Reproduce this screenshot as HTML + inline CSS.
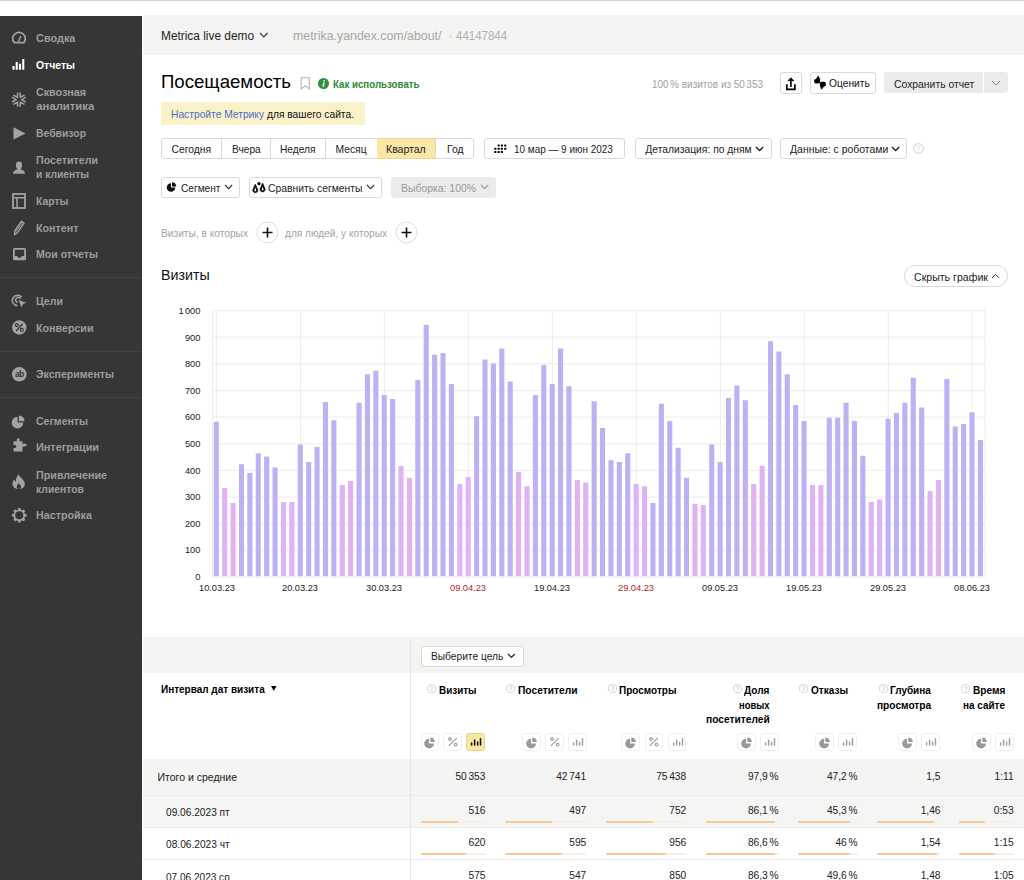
<!DOCTYPE html><html><head><meta charset="utf-8"><title>Metrica</title><style>
html,body{margin:0;padding:0;width:1024px;height:880px;overflow:hidden;background:#fff;font-family:"Liberation Sans", sans-serif;}
.t{position:absolute;white-space:nowrap;line-height:1;}
.b{position:absolute;box-sizing:border-box;border:1px solid #d9d9d9;border-radius:3px;background:#fff;}
svg{overflow:visible;position:absolute}
</style></head><body>
<div style="position:absolute;left:0px;top:0px;width:1024.00px;height:1.00px;background:#d4d4d4"></div>
<div style="position:absolute;left:0px;top:16px;width:142.00px;height:864.00px;background:#363636"></div>
<div class="t" style="left:36.30px;top:33.23px;font-size:11.3px;color:#9d9d9d;font-weight:700;transform:scaleX(0.9656);transform-origin:0 0;">Сводка</div>
<div class="t" style="left:36.30px;top:60.23px;font-size:11.3px;color:#fff;font-weight:700;transform:scaleX(0.9241);transform-origin:0 0;">Отчеты</div>
<div class="t" style="left:36.30px;top:87.23px;font-size:11.3px;color:#9d9d9d;font-weight:700;transform:scaleX(0.9489);transform-origin:0 0;">Сквозная</div>
<div class="t" style="left:36.30px;top:101.23px;font-size:11.3px;color:#9d9d9d;font-weight:700;">аналитика</div>
<div class="t" style="left:36.30px;top:127.73px;font-size:11.3px;color:#9d9d9d;font-weight:700;transform:scaleX(0.9207);transform-origin:0 0;">Вебвизор</div>
<div class="t" style="left:36.30px;top:155.23px;font-size:11.3px;color:#9d9d9d;font-weight:700;transform:scaleX(0.9434);transform-origin:0 0;">Посетители</div>
<div class="t" style="left:36.30px;top:169.23px;font-size:11.3px;color:#9d9d9d;font-weight:700;transform:scaleX(0.9091);transform-origin:0 0;">и клиенты</div>
<div class="t" style="left:36.30px;top:196.23px;font-size:11.3px;color:#9d9d9d;font-weight:700;transform:scaleX(0.9218);transform-origin:0 0;">Карты</div>
<div class="t" style="left:36.30px;top:222.73px;font-size:11.3px;color:#9d9d9d;font-weight:700;transform:scaleX(0.9486);transform-origin:0 0;">Контент</div>
<div class="t" style="left:36.30px;top:249.23px;font-size:11.3px;color:#9d9d9d;font-weight:700;transform:scaleX(0.9333);transform-origin:0 0;">Мои отчеты</div>
<div class="t" style="left:36.30px;top:295.93px;font-size:11.3px;color:#9d9d9d;font-weight:700;transform:scaleX(0.9374);transform-origin:0 0;">Цели</div>
<div class="t" style="left:36.30px;top:322.93px;font-size:11.3px;color:#9d9d9d;font-weight:700;transform:scaleX(0.9460);transform-origin:0 0;">Конверсии</div>
<div class="t" style="left:36.30px;top:369.03px;font-size:11.3px;color:#9d9d9d;font-weight:700;transform:scaleX(0.9348);transform-origin:0 0;">Эксперименты</div>
<div class="t" style="left:36.30px;top:415.93px;font-size:11.3px;color:#9d9d9d;font-weight:700;transform:scaleX(0.9319);transform-origin:0 0;">Сегменты</div>
<div class="t" style="left:36.30px;top:442.43px;font-size:11.3px;color:#9d9d9d;font-weight:700;transform:scaleX(0.9619);transform-origin:0 0;">Интеграции</div>
<div class="t" style="left:36.30px;top:469.53px;font-size:11.3px;color:#9d9d9d;font-weight:700;transform:scaleX(0.9504);transform-origin:0 0;">Привлечение</div>
<div class="t" style="left:36.30px;top:483.53px;font-size:11.3px;color:#9d9d9d;font-weight:700;transform:scaleX(0.9184);transform-origin:0 0;">клиентов</div>
<div class="t" style="left:36.30px;top:510.23px;font-size:11.3px;color:#9d9d9d;font-weight:700;transform:scaleX(0.9487);transform-origin:0 0;">Настройка</div>
<div style="position:absolute;left:0px;top:276.5px;width:142.00px;height:1.00px;background:#434343"></div>
<div style="position:absolute;left:0px;top:351.1px;width:142.00px;height:1.00px;background:#434343"></div>
<div style="position:absolute;left:0px;top:396.9px;width:142.00px;height:1.00px;background:#434343"></div>

<svg style="left:11px;top:31px" width="16" height="13"><path d="M3 11.6 A6.3 6.3 0 1 1 13 11.6 Z" stroke="#a3a3a3" stroke-width="1.7" fill="none" stroke-linejoin="round"/><path d="M7.3 11 L9.8 5" stroke="#a3a3a3" stroke-width="1.4"/></svg>
<svg style="left:12px;top:58px" width="14" height="12"><path d="M1.5 8 V11.75 M4.75 4 V11.75 M8 5.75 V11.75 M11.25 1 V11.75" stroke="#fff" stroke-width="2.1"/></svg>
<svg style="left:11px;top:91.5px" width="16" height="16"><g transform="translate(7.9,7.7)" stroke="#a3a3a3" stroke-width="1.5" fill="none"><path d="M6.8 -2.5 L2.9 0 L6.8 2.5" transform="rotate(0)"/><path d="M6.8 -2.5 L2.9 0 L6.8 2.5" transform="rotate(60)"/><path d="M6.8 -2.5 L2.9 0 L6.8 2.5" transform="rotate(120)"/><path d="M6.8 -2.5 L2.9 0 L6.8 2.5" transform="rotate(180)"/><path d="M6.8 -2.5 L2.9 0 L6.8 2.5" transform="rotate(240)"/><path d="M6.8 -2.5 L2.9 0 L6.8 2.5" transform="rotate(300)"/></g></svg>
<svg style="left:12.5px;top:126.5px" width="13" height="13"><path d="M0.5 0.3 L12.5 6.4 L0.5 12.6 Z" fill="#a3a3a3"/></svg>
<svg style="left:12px;top:160.5px" width="14" height="13"><path d="M7 0.5 C9.5 0.5 10.3 2.5 10 5 C9.8 6.8 9 8 8.5 8.6 C11 9.3 13 10 13 12.8 H1 C1 10 3 9.3 5.5 8.6 C5 8 4.2 6.8 4 5 C3.7 2.5 4.5 0.5 7 0.5Z" fill="#a3a3a3"/></svg>
<svg style="left:12px;top:193px" width="14" height="16"><rect x="1" y="1" width="12" height="14" stroke="#a3a3a3" stroke-width="1.8" fill="none"/><path d="M1 4.7 H13 M5 4.7 V15" stroke="#a3a3a3" stroke-width="1.5"/></svg>
<svg style="left:13px;top:220px" width="12" height="16"><path d="M1.5 14.8 L1.8 11 L8.5 1.2 L11 3 L4.3 12.8 Z" stroke="#a3a3a3" stroke-width="1.4" fill="none" stroke-linejoin="round"/><path d="M3 11.5 L9.6 2" stroke="#a3a3a3" stroke-width="0.9"/></svg>
<svg style="left:12.5px;top:248px" width="13" height="13"><path d="M1.5 0 H11.5 A1.5 1.5 0 0 1 13 1.5 V10.7 A1.5 1.5 0 0 1 11.5 12.2 H1.5 A1.5 1.5 0 0 1 0 10.7 V1.5 A1.5 1.5 0 0 1 1.5 0Z M1.8 1.8 V8 H4 L5.5 9.7 H7.5 L9 8 H11.2 V1.8Z" fill="#a3a3a3" fill-rule="evenodd"/></svg>
<svg style="left:11.5px;top:294px" width="15" height="14"><path d="M9.7 3.3 A5.2 5.2 0 1 0 5.5 11.6" stroke="#a3a3a3" stroke-width="1.6" fill="none"/><path d="M8.5 4.8 A2.6 2.6 0 1 0 5.6 8.5" stroke="#a3a3a3" stroke-width="1.5" fill="none"/><path d="M6.5 6 L14.3 8.8 L11 10 L9.6 13.4 Z" fill="#a3a3a3"/></svg>
<svg style="left:11.5px;top:320px" width="15" height="15"><circle cx="7.3" cy="7.5" r="7.2" fill="#a3a3a3"/><path d="M4.2 11 L10.5 4" stroke="#363636" stroke-width="1.3"/><circle cx="4.9" cy="5.1" r="1.5" stroke="#363636" stroke-width="1.1" fill="none"/><circle cx="9.8" cy="9.9" r="1.5" stroke="#363636" stroke-width="1.1" fill="none"/></svg>
<svg style="left:11.5px;top:367px" width="15" height="15"><circle cx="7.3" cy="7.3" r="7.3" fill="#a3a3a3"/><text x="7.3" y="10.2" font-size="8.5" font-weight="700" text-anchor="middle" fill="#363636" font-family='"Liberation Sans"' letter-spacing="-0.6">ab</text></svg>
<svg style="left:11px;top:414.5px" width="15" height="14"><path d="M6.5 1.8 A5.8 5.8 0 1 0 12.3 7.6 H6.5 Z" fill="#a3a3a3"/><path d="M7.8 0.5 A5.8 5.8 0 0 1 13.6 6.3 H7.8 Z" fill="#a3a3a3"/></svg>
<svg style="left:12.5px;top:438px" width="15" height="14"><path d="M0.5 3.3 H4 C3.5 2.5 3.5 0.3 5.2 0.3 C6.9 0.3 6.9 2.5 6.4 3.3 H9.5 V6 C10.5 5.5 13.8 5.5 13.8 7.1 C13.8 8.7 10.5 8.7 9.5 8.2 V13.5 H0.5 V9.8 C1.5 10.3 3.2 10 3.2 8.5 C3.2 7 1.5 6.8 0.5 7.3 Z" fill="#a3a3a3"/></svg>
<svg style="left:12px;top:474px" width="14" height="16"><path d="M6.5 0.3 C7 3 12.8 5.5 12.8 10 C12.8 13.3 10.3 15 7 15 C3.3 15 0.5 13.2 0.5 9.5 C0.5 7.5 1.8 6 2.5 5.2 C2.7 6.8 3.3 7.6 4 7.8 C3.6 4.8 5.3 2.2 6.5 0.3Z" fill="#a3a3a3"/><path d="M6.8 8.5 C7 10.2 9 11 9 13 C9 14.5 8 15 6.9 15 C5.6 15 4.7 14.3 4.7 13 C4.7 11.2 6.5 10.2 6.8 8.5Z" fill="#363636"/></svg>
<svg style="left:11.5px;top:507.5px" width="15" height="15"><g transform="translate(7.3,7.3)"><circle r="5" stroke="#a3a3a3" stroke-width="1.8" fill="none"/><rect x="-1.3" y="-7.3" width="2.6" height="2.8" fill="#a3a3a3" transform="rotate(0)"/><rect x="-1.3" y="-7.3" width="2.6" height="2.8" fill="#a3a3a3" transform="rotate(45)"/><rect x="-1.3" y="-7.3" width="2.6" height="2.8" fill="#a3a3a3" transform="rotate(90)"/><rect x="-1.3" y="-7.3" width="2.6" height="2.8" fill="#a3a3a3" transform="rotate(135)"/><rect x="-1.3" y="-7.3" width="2.6" height="2.8" fill="#a3a3a3" transform="rotate(180)"/><rect x="-1.3" y="-7.3" width="2.6" height="2.8" fill="#a3a3a3" transform="rotate(225)"/><rect x="-1.3" y="-7.3" width="2.6" height="2.8" fill="#a3a3a3" transform="rotate(270)"/><rect x="-1.3" y="-7.3" width="2.6" height="2.8" fill="#a3a3a3" transform="rotate(315)"/></g></svg>

<div style="position:absolute;left:143px;top:15px;width:881.00px;height:40.00px;background:#f4f4f2"></div>
<div class="t" style="left:161.25px;top:29.84px;font-size:12px;color:#222;font-weight:400;transform:scaleX(0.9890);transform-origin:0 0;">Metrica live demo</div>
<svg style="left:258.6px;top:32.2px" width="10" height="7"><path d="M1 1 L4.8 4.9 L8.6 1" stroke="#333" stroke-width="1.1" fill="none"/></svg>
<div class="t" style="left:293.00px;top:29.84px;font-size:12px;color:#a6a6a6;font-weight:400;transform:scaleX(1.0307);transform-origin:0 0;">metrika.yandex.com/about/</div>
<div class="t" style="left:448.50px;top:29.84px;font-size:12px;color:#bbb;font-weight:400;">·</div>
<div class="t" style="left:455.80px;top:29.84px;font-size:12px;color:#b0b0b0;font-weight:400;transform:scaleX(0.9553);transform-origin:0 0;">44147844</div>
<div class="t" style="left:161.25px;top:73.09px;font-size:18.5px;color:#000;font-weight:400;transform:scaleX(1.0054);transform-origin:0 0;">Посещаемость</div>
<svg style="left:300px;top:77px" width="11" height="14"><path d="M1.2 0.8 H9.3 V12.2 L5.25 8.6 L1.2 12.2 Z" stroke="#b5b5b5" stroke-width="1.1" fill="none" stroke-linejoin="round"/></svg>
<svg style="left:317.9px;top:77.6px" width="11" height="11"><circle cx="5.5" cy="5.5" r="5.5" fill="#2f9040"/><path d="M5.9 4.5 L5.2 8.6" stroke="#fff" stroke-width="1.5"/><circle cx="6.1" cy="2.8" r="0.85" fill="#fff"/></svg>
<div class="t" style="left:332.50px;top:78.61px;font-size:10.5px;color:#2b8a35;font-weight:700;transform:scaleX(0.9243);transform-origin:0 0;">Как использовать</div>
<div style="position:absolute;left:161px;top:102px;width:203.50px;height:23.00px;background:#fbf1c8"></div>
<div class="t" style="left:171.25px;top:108.61px;font-size:10.5px;color:#111;font-weight:400;transform:scaleX(0.9765);transform-origin:0 0;"><span style="color:#4b6cc8">Настройте Метрику</span> для вашего сайта.</div>
<div class="t" style="left:652.00px;top:78.61px;font-size:10.5px;color:#a0a0a0;font-weight:400;transform:scaleX(0.9510);transform-origin:0 0;">100<span style="margin-left:1.5px"></span>% визитов из 50<span style="margin-left:1.5px"></span>353</div>
<div class="b" style="left:779.5px;top:72px;width:22px;height:21.5px"></div>
<svg style="left:784px;top:76px" width="13" height="16"><path d="M6.9 4.5 V11" stroke="#000" stroke-width="1.6"/><path d="M4 4.7 L6.9 1.8 L9.8 4.7 Z" fill="#000" stroke="#000" stroke-width="0.8" stroke-linejoin="round"/><path d="M2.8 8.3 V13.4 H10.9 V8.3" stroke="#000" stroke-width="1.7" fill="none"/></svg>
<div class="b" style="left:809.5px;top:72px;width:66px;height:21.5px"></div>
<svg style="left:813px;top:75px" width="15" height="16"><rect x="1.2" y="3.9" width="5.9" height="4.6" rx="1.7" fill="#000"/><path d="M2.6 4.8 L5.4 1.1 L6.9 4.8 Z" fill="#000" stroke="#000" stroke-width="0.6" stroke-linejoin="round"/><rect x="6.9" y="6.8" width="6" height="4.6" rx="1.7" fill="#000"/><path d="M7.1 10.6 L8.6 14.3 L11.4 10.6 Z" fill="#000" stroke="#000" stroke-width="0.6" stroke-linejoin="round"/></svg>
<div class="t" style="left:828.75px;top:78.41px;font-size:10.5px;color:#111;font-weight:400;transform:scaleX(0.9739);transform-origin:0 0;">Оценить</div>
<div style="position:absolute;left:884px;top:72px;width:99.00px;height:21.20px;background:#ebebeb;border-radius:3px 0 0 3px"></div>
<div style="position:absolute;left:984px;top:72px;width:24.00px;height:21.20px;background:#ebebeb;border-radius:0 3px 3px 0"></div>
<div class="t" style="left:893.60px;top:78.51px;font-size:10.5px;color:#222;font-weight:400;transform:scaleX(0.9879);transform-origin:0 0;">Сохранить отчет</div>
<svg style="left:991px;top:80px" width="10" height="6"><path d="M1 1 L5 5 L9 1" stroke="#888" stroke-width="1" fill="none"/></svg>
<div class="b" style="left:161px;top:138px;width:313px;height:21px"></div>
<div class="t" style="left:171.50px;top:144.88px;font-size:10.3px;color:#222;font-weight:400;">Сегодня</div>
<div style="position:absolute;left:220.75px;top:138px;width:1.00px;height:21.00px;background:#d9d9d9"></div>
<div class="t" style="left:231.50px;top:144.88px;font-size:10.3px;color:#222;font-weight:400;transform:scaleX(0.9884);transform-origin:0 0;">Вчера</div>
<div style="position:absolute;left:270.0px;top:138px;width:1.00px;height:21.00px;background:#d9d9d9"></div>
<div class="t" style="left:280.25px;top:144.88px;font-size:10.3px;color:#222;font-weight:400;transform:scaleX(0.9881);transform-origin:0 0;">Неделя</div>
<div style="position:absolute;left:325.0px;top:138px;width:1.00px;height:21.00px;background:#d9d9d9"></div>
<div class="t" style="left:335.50px;top:144.88px;font-size:10.3px;color:#222;font-weight:400;">Месяц</div>
<div style="position:absolute;left:376.5px;top:138px;width:59.25px;height:21.00px;background:#fae7a5;border-top:1px solid #e8d68f;border-bottom:1px solid #e8d68f;box-sizing:border-box"></div>
<div class="t" style="left:386.25px;top:144.88px;font-size:10.3px;color:#222;font-weight:400;transform:scaleX(1.0212);transform-origin:0 0;">Квартал</div>
<div style="position:absolute;left:435.25px;top:138px;width:1.00px;height:21.00px;background:#d9d9d9"></div>
<div class="t" style="left:446.50px;top:144.88px;font-size:10.3px;color:#222;font-weight:400;transform:scaleX(1.0062);transform-origin:0 0;">Год</div>
<div class="b" style="left:484.25px;top:138px;width:140.5px;height:21px"></div>
<svg style="left:494px;top:143.5px" width="14" height="11"><rect x="3.5999999999999996" y="0.5" width="2.1" height="2.1" rx="0.5" fill="#000"/><rect x="6.8999999999999995" y="0.5" width="2.1" height="2.1" rx="0.5" fill="#000"/><rect x="10.2" y="0.5" width="2.1" height="2.1" rx="0.5" fill="#000"/><rect x="0.3" y="3.7" width="2.1" height="2.1" rx="0.5" fill="#000"/><rect x="3.5999999999999996" y="3.7" width="2.1" height="2.1" rx="0.5" fill="#000"/><rect x="6.8999999999999995" y="3.7" width="2.1" height="2.1" rx="0.5" fill="#000"/><rect x="10.2" y="3.7" width="2.1" height="2.1" rx="0.5" fill="#000"/><rect x="0.3" y="6.9" width="2.1" height="2.1" rx="0.5" fill="#000"/><rect x="3.5999999999999996" y="6.9" width="2.1" height="2.1" rx="0.5" fill="#000"/><rect x="6.8999999999999995" y="6.9" width="2.1" height="2.1" rx="0.5" fill="#000"/></svg>
<div class="t" style="left:514.25px;top:144.88px;font-size:10.3px;color:#222;font-weight:400;transform:scaleX(0.9642);transform-origin:0 0;">10 мар — 9 июн 2023</div>
<div class="b" style="left:635.4px;top:138px;width:136.2px;height:21px"></div>
<div class="t" style="left:645.30px;top:144.88px;font-size:10.3px;color:#222;font-weight:400;">Детализация: по дням</div>
<svg style="left:755px;top:145.8px" width="10" height="7"><path d="M1 1 L4.6 4.6 L8.2 1" stroke="#111" stroke-width="1.3" fill="none"/></svg>
<div class="b" style="left:780.1px;top:138px;width:127.3px;height:21px"></div>
<div class="t" style="left:789.60px;top:144.88px;font-size:10.3px;color:#222;font-weight:400;transform:scaleX(1.0147);transform-origin:0 0;">Данные: с роботами</div>
<svg style="left:891px;top:145.8px" width="10" height="7"><path d="M1 1 L4.6 4.6 L8.2 1" stroke="#111" stroke-width="1.3" fill="none"/></svg>
<svg style="left:912.5px;top:143px" width="11" height="11"><circle cx="5.5" cy="5.5" r="4.8" stroke="#ccc" fill="none"/><text x="5.5" y="8" font-size="7" text-anchor="middle" fill="#ccc" font-family='"Liberation Sans"'>?</text></svg>
<div class="b" style="left:161.25px;top:176.6px;width:78.25px;height:21.8px"></div>
<svg style="left:166px;top:182px" width="11" height="11"><path d="M5 1.2 A4.3 4.3 0 1 0 9.3 5.5 H5 Z" fill="#111"/><path d="M6 0.2 A4.3 4.3 0 0 1 10.3 4.5 H6 Z" fill="#111"/></svg>
<div class="t" style="left:180.80px;top:183.88px;font-size:10.3px;color:#222;font-weight:400;transform:scaleX(0.9841);transform-origin:0 0;">Сегмент</div>
<svg style="left:224px;top:184px" width="10" height="7"><path d="M1 1 L4.6 4.6 L8.2 1" stroke="#333" stroke-width="1.1" fill="none"/></svg>
<div class="b" style="left:248.5px;top:176.6px;width:133.5px;height:21.8px"></div>
<svg style="left:250px;top:181px" width="18" height="14"><g transform="translate(0,0)"><path d="M5.3 3 L2.75 8.7 A2.6 2.6 0 1 0 7.85 8.7 Z" fill="#000" stroke="#000" stroke-width="0.5" stroke-linejoin="round"/><path d="M5.3 6.3 L4.4 9.1 A0.95 0.95 0 1 0 6.2 9.1 Z" fill="#fff"/></g><g transform="translate(7.3,-0.9)"><path d="M5.3 3 L2.75 8.7 A2.6 2.6 0 1 0 7.85 8.7 Z" fill="#000" stroke="#000" stroke-width="0.5" stroke-linejoin="round"/><path d="M5.3 6.3 L4.4 9.1 A0.95 0.95 0 1 0 6.2 9.1 Z" fill="#fff"/></g><circle cx="9" cy="2.7" r="1.6" fill="#000"/></svg>
<div class="t" style="left:267.50px;top:183.88px;font-size:10.3px;color:#222;font-weight:400;transform:scaleX(1.0052);transform-origin:0 0;">Сравнить сегменты</div>
<svg style="left:366px;top:184px" width="10" height="7"><path d="M1 1 L4.6 4.6 L8.2 1" stroke="#333" stroke-width="1.1" fill="none"/></svg>
<div style="position:absolute;left:390.5px;top:176.6px;width:105.75px;height:21.80px;background:#ebebeb;border-radius:3px"></div>
<div class="t" style="left:400.50px;top:183.88px;font-size:10.3px;color:#999;font-weight:400;transform:scaleX(1.0113);transform-origin:0 0;">Выборка: 100%</div>
<svg style="left:480px;top:184px" width="10" height="7"><path d="M1 1 L4.6 4.6 L8.2 1" stroke="#999" stroke-width="1.1" fill="none"/></svg>
<div class="t" style="left:160.90px;top:227.91px;font-size:10.5px;color:#a3a3a3;font-weight:400;transform:scaleX(0.9697);transform-origin:0 0;">Визиты, в которых</div>
<svg style="left:256.0px;top:220.5px" width="23" height="23"><circle cx="11.5" cy="11.5" r="10.5" stroke="#ddd" fill="#fff"/><path d="M11.5 6.5 V16.5 M6.5 11.5 H16.5" stroke="#111" stroke-width="1.6"/></svg>
<svg style="left:395.3px;top:220.5px" width="23" height="23"><circle cx="11.5" cy="11.5" r="10.5" stroke="#ddd" fill="#fff"/><path d="M11.5 6.5 V16.5 M6.5 11.5 H16.5" stroke="#111" stroke-width="1.6"/></svg>
<div class="t" style="left:284.80px;top:227.91px;font-size:10.5px;color:#a3a3a3;font-weight:400;transform:scaleX(0.9628);transform-origin:0 0;">для людей, у которых</div>
<div class="t" style="left:160.90px;top:267.85px;font-size:14px;color:#111;font-weight:400;transform:scaleX(1.0174);transform-origin:0 0;">Визиты</div>
<div class="b" style="left:904.4px;top:265.25px;width:103.3px;height:21.5px;border-radius:11px"></div>
<div class="t" style="left:914.00px;top:272.68px;font-size:10.3px;color:#222;font-weight:400;transform:scaleX(1.0274);transform-origin:0 0;">Скрыть график</div>
<svg style="left:991.3px;top:272.6px" width="10" height="7"><path d="M1 5 L4.6 1.4 L8.2 5" stroke="#333" stroke-width="1" fill="none"/></svg>
<svg style="position:absolute;left:150px;top:295px" width="874" height="310" viewBox="150 295 874 310" font-family='"Liberation Sans", sans-serif'>
<line x1="212.5" y1="310.50" x2="985" y2="310.50" stroke="#ececec" stroke-width="1"/>
<line x1="212.5" y1="337.15" x2="985" y2="337.15" stroke="#ececec" stroke-width="1"/>
<line x1="212.5" y1="363.80" x2="985" y2="363.80" stroke="#ececec" stroke-width="1"/>
<line x1="212.5" y1="390.45" x2="985" y2="390.45" stroke="#ececec" stroke-width="1"/>
<line x1="212.5" y1="417.10" x2="985" y2="417.10" stroke="#ececec" stroke-width="1"/>
<line x1="212.5" y1="443.75" x2="985" y2="443.75" stroke="#ececec" stroke-width="1"/>
<line x1="212.5" y1="470.40" x2="985" y2="470.40" stroke="#ececec" stroke-width="1"/>
<line x1="212.5" y1="497.05" x2="985" y2="497.05" stroke="#ececec" stroke-width="1"/>
<line x1="212.5" y1="523.70" x2="985" y2="523.70" stroke="#ececec" stroke-width="1"/>
<line x1="212.5" y1="550.35" x2="985" y2="550.35" stroke="#ececec" stroke-width="1"/>
<line x1="212.5" y1="577.00" x2="985" y2="577.00" stroke="#ececec" stroke-width="1"/>
<line x1="216.50" y1="310.5" x2="216.50" y2="577" stroke="#ececec" stroke-width="1"/>
<line x1="300.47" y1="310.5" x2="300.47" y2="577" stroke="#ececec" stroke-width="1"/>
<line x1="384.44" y1="310.5" x2="384.44" y2="577" stroke="#ececec" stroke-width="1"/>
<line x1="468.41" y1="310.5" x2="468.41" y2="577" stroke="#ececec" stroke-width="1"/>
<line x1="552.38" y1="310.5" x2="552.38" y2="577" stroke="#ececec" stroke-width="1"/>
<line x1="636.35" y1="310.5" x2="636.35" y2="577" stroke="#ececec" stroke-width="1"/>
<line x1="720.32" y1="310.5" x2="720.32" y2="577" stroke="#ececec" stroke-width="1"/>
<line x1="804.29" y1="310.5" x2="804.29" y2="577" stroke="#ececec" stroke-width="1"/>
<line x1="888.26" y1="310.5" x2="888.26" y2="577" stroke="#ececec" stroke-width="1"/>
<line x1="972.23" y1="310.5" x2="972.23" y2="577" stroke="#ececec" stroke-width="1"/>
<line x1="212.5" y1="310.5" x2="212.5" y2="577" stroke="#ececec"/>
<line x1="985" y1="310.5" x2="985" y2="577" stroke="#ececec"/>
<rect x="213.75" y="421.75" width="5.1" height="154.45" fill="#bdb1f3"/>
<rect x="222.15" y="488.00" width="5.1" height="88.20" fill="#e0b1f3"/>
<rect x="230.54" y="503.00" width="5.1" height="73.20" fill="#e0b1f3"/>
<rect x="238.94" y="464.25" width="5.1" height="111.95" fill="#bdb1f3"/>
<rect x="247.34" y="473.00" width="5.1" height="103.20" fill="#bdb1f3"/>
<rect x="255.74" y="453.25" width="5.1" height="122.95" fill="#bdb1f3"/>
<rect x="264.13" y="456.50" width="5.1" height="119.70" fill="#bdb1f3"/>
<rect x="272.53" y="467.50" width="5.1" height="108.70" fill="#bdb1f3"/>
<rect x="280.93" y="502.00" width="5.1" height="74.20" fill="#e0b1f3"/>
<rect x="289.32" y="502.00" width="5.1" height="74.20" fill="#e0b1f3"/>
<rect x="297.72" y="444.50" width="5.1" height="131.70" fill="#bdb1f3"/>
<rect x="306.12" y="462.00" width="5.1" height="114.20" fill="#bdb1f3"/>
<rect x="314.51" y="447.00" width="5.1" height="129.20" fill="#bdb1f3"/>
<rect x="322.91" y="402.00" width="5.1" height="174.20" fill="#bdb1f3"/>
<rect x="331.31" y="420.25" width="5.1" height="155.95" fill="#bdb1f3"/>
<rect x="339.70" y="485.00" width="5.1" height="91.20" fill="#e0b1f3"/>
<rect x="348.10" y="481.00" width="5.1" height="95.20" fill="#e0b1f3"/>
<rect x="356.50" y="402.75" width="5.1" height="173.45" fill="#bdb1f3"/>
<rect x="364.90" y="374.25" width="5.1" height="201.95" fill="#bdb1f3"/>
<rect x="373.29" y="370.75" width="5.1" height="205.45" fill="#bdb1f3"/>
<rect x="381.69" y="395.00" width="5.1" height="181.20" fill="#bdb1f3"/>
<rect x="390.09" y="399.00" width="5.1" height="177.20" fill="#bdb1f3"/>
<rect x="398.48" y="466.00" width="5.1" height="110.20" fill="#e0b1f3"/>
<rect x="406.88" y="477.75" width="5.1" height="98.45" fill="#e0b1f3"/>
<rect x="415.28" y="380.00" width="5.1" height="196.20" fill="#bdb1f3"/>
<rect x="423.68" y="324.75" width="5.1" height="251.45" fill="#bdb1f3"/>
<rect x="432.07" y="354.75" width="5.1" height="221.45" fill="#bdb1f3"/>
<rect x="440.47" y="353.00" width="5.1" height="223.20" fill="#bdb1f3"/>
<rect x="448.87" y="384.00" width="5.1" height="192.20" fill="#bdb1f3"/>
<rect x="457.26" y="484.00" width="5.1" height="92.20" fill="#e0b1f3"/>
<rect x="465.66" y="477.00" width="5.1" height="99.20" fill="#e0b1f3"/>
<rect x="474.06" y="416.25" width="5.1" height="159.95" fill="#bdb1f3"/>
<rect x="482.45" y="359.50" width="5.1" height="216.70" fill="#bdb1f3"/>
<rect x="490.85" y="363.50" width="5.1" height="212.70" fill="#bdb1f3"/>
<rect x="499.25" y="348.50" width="5.1" height="227.70" fill="#bdb1f3"/>
<rect x="507.64" y="381.50" width="5.1" height="194.70" fill="#bdb1f3"/>
<rect x="516.04" y="472.00" width="5.1" height="104.20" fill="#e0b1f3"/>
<rect x="524.44" y="486.25" width="5.1" height="89.95" fill="#e0b1f3"/>
<rect x="532.84" y="395.00" width="5.1" height="181.20" fill="#bdb1f3"/>
<rect x="541.23" y="365.00" width="5.1" height="211.20" fill="#bdb1f3"/>
<rect x="549.63" y="384.00" width="5.1" height="192.20" fill="#bdb1f3"/>
<rect x="558.03" y="348.50" width="5.1" height="227.70" fill="#bdb1f3"/>
<rect x="566.42" y="386.25" width="5.1" height="189.95" fill="#bdb1f3"/>
<rect x="574.82" y="480.00" width="5.1" height="96.20" fill="#e0b1f3"/>
<rect x="583.22" y="482.50" width="5.1" height="93.70" fill="#e0b1f3"/>
<rect x="591.62" y="401.25" width="5.1" height="174.95" fill="#bdb1f3"/>
<rect x="600.01" y="428.00" width="5.1" height="148.20" fill="#bdb1f3"/>
<rect x="608.41" y="460.25" width="5.1" height="115.95" fill="#bdb1f3"/>
<rect x="616.81" y="462.00" width="5.1" height="114.20" fill="#bdb1f3"/>
<rect x="625.20" y="453.25" width="5.1" height="122.95" fill="#bdb1f3"/>
<rect x="633.60" y="484.00" width="5.1" height="92.20" fill="#e0b1f3"/>
<rect x="642.00" y="486.25" width="5.1" height="89.95" fill="#e0b1f3"/>
<rect x="650.39" y="503.00" width="5.1" height="73.20" fill="#bdb1f3"/>
<rect x="658.79" y="403.75" width="5.1" height="172.45" fill="#bdb1f3"/>
<rect x="667.19" y="421.00" width="5.1" height="155.20" fill="#bdb1f3"/>
<rect x="675.59" y="447.75" width="5.1" height="128.45" fill="#bdb1f3"/>
<rect x="683.98" y="477.75" width="5.1" height="98.45" fill="#bdb1f3"/>
<rect x="692.38" y="503.75" width="5.1" height="72.45" fill="#e0b1f3"/>
<rect x="700.78" y="505.00" width="5.1" height="71.20" fill="#e0b1f3"/>
<rect x="709.17" y="444.50" width="5.1" height="131.70" fill="#bdb1f3"/>
<rect x="717.57" y="462.00" width="5.1" height="114.20" fill="#bdb1f3"/>
<rect x="725.97" y="398.00" width="5.1" height="178.20" fill="#bdb1f3"/>
<rect x="734.36" y="385.50" width="5.1" height="190.70" fill="#bdb1f3"/>
<rect x="742.76" y="400.25" width="5.1" height="175.95" fill="#bdb1f3"/>
<rect x="751.16" y="484.00" width="5.1" height="92.20" fill="#e0b1f3"/>
<rect x="759.56" y="465.75" width="5.1" height="110.45" fill="#e0b1f3"/>
<rect x="767.95" y="341.25" width="5.1" height="234.95" fill="#bdb1f3"/>
<rect x="776.35" y="351.50" width="5.1" height="224.70" fill="#bdb1f3"/>
<rect x="784.75" y="374.25" width="5.1" height="201.95" fill="#bdb1f3"/>
<rect x="793.14" y="405.00" width="5.1" height="171.20" fill="#bdb1f3"/>
<rect x="801.54" y="421.00" width="5.1" height="155.20" fill="#bdb1f3"/>
<rect x="809.94" y="485.00" width="5.1" height="91.20" fill="#e0b1f3"/>
<rect x="818.33" y="485.00" width="5.1" height="91.20" fill="#e0b1f3"/>
<rect x="826.73" y="417.75" width="5.1" height="158.45" fill="#bdb1f3"/>
<rect x="835.13" y="417.75" width="5.1" height="158.45" fill="#bdb1f3"/>
<rect x="843.52" y="402.75" width="5.1" height="173.45" fill="#bdb1f3"/>
<rect x="851.92" y="421.00" width="5.1" height="155.20" fill="#bdb1f3"/>
<rect x="860.32" y="455.75" width="5.1" height="120.45" fill="#bdb1f3"/>
<rect x="868.72" y="502.00" width="5.1" height="74.20" fill="#e0b1f3"/>
<rect x="877.11" y="499.50" width="5.1" height="76.70" fill="#e0b1f3"/>
<rect x="885.51" y="418.75" width="5.1" height="157.45" fill="#bdb1f3"/>
<rect x="893.91" y="413.00" width="5.1" height="163.20" fill="#bdb1f3"/>
<rect x="902.30" y="402.75" width="5.1" height="173.45" fill="#bdb1f3"/>
<rect x="910.70" y="377.75" width="5.1" height="198.45" fill="#bdb1f3"/>
<rect x="919.10" y="407.50" width="5.1" height="168.70" fill="#bdb1f3"/>
<rect x="927.50" y="491.00" width="5.1" height="85.20" fill="#e0b1f3"/>
<rect x="935.89" y="480.00" width="5.1" height="96.20" fill="#e0b1f3"/>
<rect x="944.29" y="379.00" width="5.1" height="197.20" fill="#bdb1f3"/>
<rect x="952.69" y="426.50" width="5.1" height="149.70" fill="#bdb1f3"/>
<rect x="961.08" y="424.00" width="5.1" height="152.20" fill="#bdb1f3"/>
<rect x="969.48" y="412.25" width="5.1" height="163.95" fill="#bdb1f3"/>
<rect x="977.88" y="440.00" width="5.1" height="136.20" fill="#bdb1f3"/>
</svg>
<div class="t" style="left:178.41px;top:307.38px;font-size:9.3px;color:#222;font-weight:400;">1<span style="margin-left:1.3px"></span>000</div>
<div class="t" style="left:184.89px;top:333.90px;font-size:9.3px;color:#222;font-weight:400;">900</div>
<div class="t" style="left:184.89px;top:360.43px;font-size:9.3px;color:#222;font-weight:400;">800</div>
<div class="t" style="left:184.89px;top:386.95px;font-size:9.3px;color:#222;font-weight:400;">700</div>
<div class="t" style="left:184.89px;top:413.48px;font-size:9.3px;color:#222;font-weight:400;">600</div>
<div class="t" style="left:184.89px;top:440.00px;font-size:9.3px;color:#222;font-weight:400;">500</div>
<div class="t" style="left:184.89px;top:466.53px;font-size:9.3px;color:#222;font-weight:400;">400</div>
<div class="t" style="left:184.89px;top:493.05px;font-size:9.3px;color:#222;font-weight:400;">300</div>
<div class="t" style="left:184.89px;top:519.58px;font-size:9.3px;color:#222;font-weight:400;">200</div>
<div class="t" style="left:184.89px;top:546.10px;font-size:9.3px;color:#222;font-weight:400;">100</div>
<div class="t" style="left:195.23px;top:572.63px;font-size:9.3px;color:#222;font-weight:400;">0</div>
<div class="t" style="left:198.50px;top:584.33px;font-size:9.3px;color:#222;font-weight:400;transform:scaleX(0.9943);transform-origin:0 0;">10.03.23</div>
<div class="t" style="left:282.47px;top:584.33px;font-size:9.3px;color:#222;font-weight:400;transform:scaleX(0.9943);transform-origin:0 0;">20.03.23</div>
<div class="t" style="left:366.44px;top:584.33px;font-size:9.3px;color:#222;font-weight:400;transform:scaleX(0.9943);transform-origin:0 0;">30.03.23</div>
<div class="t" style="left:450.41px;top:584.33px;font-size:9.3px;color:#b0282b;font-weight:400;transform:scaleX(0.9943);transform-origin:0 0;">09.04.23</div>
<div class="t" style="left:534.38px;top:584.33px;font-size:9.3px;color:#222;font-weight:400;transform:scaleX(0.9943);transform-origin:0 0;">19.04.23</div>
<div class="t" style="left:618.35px;top:584.33px;font-size:9.3px;color:#b0282b;font-weight:400;transform:scaleX(0.9943);transform-origin:0 0;">29.04.23</div>
<div class="t" style="left:702.32px;top:584.33px;font-size:9.3px;color:#222;font-weight:400;transform:scaleX(0.9943);transform-origin:0 0;">09.05.23</div>
<div class="t" style="left:786.29px;top:584.33px;font-size:9.3px;color:#222;font-weight:400;transform:scaleX(0.9943);transform-origin:0 0;">19.05.23</div>
<div class="t" style="left:870.26px;top:584.33px;font-size:9.3px;color:#222;font-weight:400;transform:scaleX(0.9943);transform-origin:0 0;">29.05.23</div>
<div class="t" style="left:954.23px;top:584.33px;font-size:9.3px;color:#222;font-weight:400;transform:scaleX(0.9943);transform-origin:0 0;">08.06.23</div>
<div style="position:absolute;left:143px;top:637.3px;width:881.00px;height:36.10px;background:#f4f4f2"></div>
<div class="b" style="left:421px;top:645.5px;width:102.5px;height:21.5px"></div>
<div class="t" style="left:430.75px;top:651.78px;font-size:10.3px;color:#222;font-weight:400;transform:scaleX(0.9896);transform-origin:0 0;">Выберите цель</div>
<svg style="left:507px;top:653px" width="10" height="7"><path d="M1 1 L4.4 4.4 L7.8 1" stroke="#222" stroke-width="1.2" fill="none"/></svg>
<div class="t" style="left:160.60px;top:684.41px;font-size:10.5px;color:#000;font-weight:700;transform:scaleX(0.9498);transform-origin:0 0;">Интервал дат визита</div>
<svg style="left:270.5px;top:686px" width="6" height="5"><path d="M0 0 H5.5 L2.75 5Z" fill="#000"/></svg>
<div style="position:absolute;left:143px;top:759px;width:881.00px;height:36.20px;background:#f4f4f2"></div>
<div style="position:absolute;left:143px;top:795.2px;width:881.00px;height:32.30px;background:#f5f5f4"></div>
<div style="position:absolute;left:143px;top:795px;width:881.00px;height:1.00px;background:#ebebea"></div>
<div style="position:absolute;left:143px;top:827.2px;width:881.00px;height:1.00px;background:#ececec"></div>
<div style="position:absolute;left:143px;top:859.2px;width:881.00px;height:1.00px;background:#ececec"></div>
<div style="position:absolute;left:410px;top:637.5px;width:1.00px;height:242.50px;background:#e6e6e6"></div>
<div class="t" style="left:157.50px;top:772.36px;font-size:10.5px;color:#222;font-weight:400;">Итого и средние</div>
<div class="t" style="left:166.25px;top:807.58px;font-size:10.3px;color:#222;font-weight:400;transform:scaleX(0.9852);transform-origin:0 0;">09.06.2023 пт</div>
<div class="t" style="left:166.25px;top:840.28px;font-size:10.3px;color:#222;font-weight:400;transform:scaleX(0.9884);transform-origin:0 0;">08.06.2023 чт</div>
<div class="t" style="left:166.25px;top:872.78px;font-size:10.3px;color:#222;font-weight:400;transform:scaleX(0.9764);transform-origin:0 0;">07.06.2023 ср</div>
<svg style="left:427px;top:684px" width="9" height="9"><circle cx="4.5" cy="4.5" r="4.1" stroke="#cfcfcf" fill="none" stroke-width="0.9"/><text x="4.5" y="6.8" font-size="6.5" text-anchor="middle" fill="#b8b8b8" font-family='"Liberation Sans"'>?</text></svg>
<div class="t" style="left:438.75px;top:684.86px;font-size:10.5px;color:#000;font-weight:700;transform:scaleX(0.9416);transform-origin:0 0;">Визиты</div>
<svg style="left:506px;top:684px" width="9" height="9"><circle cx="4.5" cy="4.5" r="4.1" stroke="#cfcfcf" fill="none" stroke-width="0.9"/><text x="4.5" y="6.8" font-size="6.5" text-anchor="middle" fill="#b8b8b8" font-family='"Liberation Sans"'>?</text></svg>
<div class="t" style="left:517.50px;top:684.86px;font-size:10.5px;color:#000;font-weight:700;transform:scaleX(0.9743);transform-origin:0 0;">Посетители</div>
<svg style="left:607.5px;top:684px" width="9" height="9"><circle cx="4.5" cy="4.5" r="4.1" stroke="#cfcfcf" fill="none" stroke-width="0.9"/><text x="4.5" y="6.8" font-size="6.5" text-anchor="middle" fill="#b8b8b8" font-family='"Liberation Sans"'>?</text></svg>
<div class="t" style="left:618.75px;top:684.86px;font-size:10.5px;color:#000;font-weight:700;transform:scaleX(0.9522);transform-origin:0 0;">Просмотры</div>
<svg style="left:732.5px;top:684px" width="9" height="9"><circle cx="4.5" cy="4.5" r="4.1" stroke="#cfcfcf" fill="none" stroke-width="0.9"/><text x="4.5" y="6.8" font-size="6.5" text-anchor="middle" fill="#b8b8b8" font-family='"Liberation Sans"'>?</text></svg>
<div class="t" style="left:743.75px;top:684.86px;font-size:10.5px;color:#000;font-weight:700;transform:scaleX(0.9603);transform-origin:0 0;">Доля</div>
<div class="t" style="left:738.75px;top:699.61px;font-size:10.5px;color:#000;font-weight:700;transform:scaleX(0.8965);transform-origin:0 0;">новых</div>
<div class="t" style="left:705.50px;top:714.41px;font-size:10.5px;color:#000;font-weight:700;transform:scaleX(0.9724);transform-origin:0 0;">посетителей</div>
<svg style="left:799px;top:684px" width="9" height="9"><circle cx="4.5" cy="4.5" r="4.1" stroke="#cfcfcf" fill="none" stroke-width="0.9"/><text x="4.5" y="6.8" font-size="6.5" text-anchor="middle" fill="#b8b8b8" font-family='"Liberation Sans"'>?</text></svg>
<div class="t" style="left:810.75px;top:684.86px;font-size:10.5px;color:#000;font-weight:700;transform:scaleX(0.9594);transform-origin:0 0;">Отказы</div>
<svg style="left:878.8px;top:684px" width="9" height="9"><circle cx="4.5" cy="4.5" r="4.1" stroke="#cfcfcf" fill="none" stroke-width="0.9"/><text x="4.5" y="6.8" font-size="6.5" text-anchor="middle" fill="#b8b8b8" font-family='"Liberation Sans"'>?</text></svg>
<div class="t" style="left:890.10px;top:684.86px;font-size:10.5px;color:#000;font-weight:700;transform:scaleX(0.9512);transform-origin:0 0;">Глубина</div>
<div class="t" style="left:876.80px;top:699.61px;font-size:10.5px;color:#000;font-weight:700;transform:scaleX(0.9657);transform-origin:0 0;">просмотра</div>
<svg style="left:961px;top:684px" width="9" height="9"><circle cx="4.5" cy="4.5" r="4.1" stroke="#cfcfcf" fill="none" stroke-width="0.9"/><text x="4.5" y="6.8" font-size="6.5" text-anchor="middle" fill="#b8b8b8" font-family='"Liberation Sans"'>?</text></svg>
<div class="t" style="left:972.60px;top:684.86px;font-size:10.5px;color:#000;font-weight:700;transform:scaleX(0.9616);transform-origin:0 0;">Время</div>
<div class="t" style="left:963.00px;top:699.61px;font-size:10.5px;color:#000;font-weight:700;transform:scaleX(0.9449);transform-origin:0 0;">на сайте</div>
<div class="b" style="left:420.5px;top:733px;width:18.5px;height:18.3px;border-color:#efefef;background:#fff;border-radius:2.5px"></div>
<svg style="left:424.0px;top:736.5px" width="12" height="12"><path d="M5.1 1.7 A4.9 4.9 0 1 0 10 6.6 H5.1 Z" fill="#999"/><path d="M6.3 0.5 A4.6 4.6 0 0 1 10.9 5.1 H6.3 Z" fill="#999"/></svg>
<div class="b" style="left:443.25px;top:733px;width:18.5px;height:18.3px;border-color:#efefef;background:#fff;border-radius:2.5px"></div>
<svg style="left:447.75px;top:737px" width="10" height="10"><circle cx="2" cy="2" r="1.35" stroke="#999" stroke-width="1.1" fill="none"/><circle cx="7.6" cy="7.6" r="1.35" stroke="#999" stroke-width="1.1" fill="none"/><path d="M0.8 8.9 L8.9 0.8" stroke="#999" stroke-width="1.1"/></svg>
<div class="b" style="left:466.25px;top:733px;width:18.5px;height:18.3px;border-color:#e6d28c;background:#fbe7a3;border-radius:2.5px"></div>
<svg style="left:470.25px;top:737px" width="12" height="10"><path d="M1.6 5.9 V7.9 M4.6 3.1 V7.9 M7.6 5.1 V7.9 M10.5 1.8 V7.9" stroke="#111" stroke-width="1.55" stroke-linecap="round"/></svg>
<div class="b" style="left:522px;top:733px;width:18.5px;height:18.3px;border-color:#efefef;background:#fff;border-radius:2.5px"></div>
<svg style="left:525.5px;top:736.5px" width="12" height="12"><path d="M5.1 1.7 A4.9 4.9 0 1 0 10 6.6 H5.1 Z" fill="#999"/><path d="M6.3 0.5 A4.6 4.6 0 0 1 10.9 5.1 H6.3 Z" fill="#999"/></svg>
<div class="b" style="left:545px;top:733px;width:18.5px;height:18.3px;border-color:#efefef;background:#fff;border-radius:2.5px"></div>
<svg style="left:549.5px;top:737px" width="10" height="10"><circle cx="2" cy="2" r="1.35" stroke="#999" stroke-width="1.1" fill="none"/><circle cx="7.6" cy="7.6" r="1.35" stroke="#999" stroke-width="1.1" fill="none"/><path d="M0.8 8.9 L8.9 0.8" stroke="#999" stroke-width="1.1"/></svg>
<div class="b" style="left:568px;top:733px;width:18.5px;height:18.3px;border-color:#efefef;background:#fff;border-radius:2.5px"></div>
<svg style="left:572px;top:737px" width="12" height="10"><path d="M1.6 5.9 V7.9 M4.6 3.1 V7.9 M7.6 5.1 V7.9 M10.5 1.8 V7.9" stroke="#9d9d9d" stroke-width="1.45" stroke-linecap="round"/></svg>
<div class="b" style="left:621.25px;top:733px;width:18.5px;height:18.3px;border-color:#efefef;background:#fff;border-radius:2.5px"></div>
<svg style="left:624.75px;top:736.5px" width="12" height="12"><path d="M5.1 1.7 A4.9 4.9 0 1 0 10 6.6 H5.1 Z" fill="#999"/><path d="M6.3 0.5 A4.6 4.6 0 0 1 10.9 5.1 H6.3 Z" fill="#999"/></svg>
<div class="b" style="left:644.5px;top:733px;width:18.5px;height:18.3px;border-color:#efefef;background:#fff;border-radius:2.5px"></div>
<svg style="left:649.0px;top:737px" width="10" height="10"><circle cx="2" cy="2" r="1.35" stroke="#999" stroke-width="1.1" fill="none"/><circle cx="7.6" cy="7.6" r="1.35" stroke="#999" stroke-width="1.1" fill="none"/><path d="M0.8 8.9 L8.9 0.8" stroke="#999" stroke-width="1.1"/></svg>
<div class="b" style="left:667.5px;top:733px;width:18.5px;height:18.3px;border-color:#efefef;background:#fff;border-radius:2.5px"></div>
<svg style="left:671.5px;top:737px" width="12" height="10"><path d="M1.6 5.9 V7.9 M4.6 3.1 V7.9 M7.6 5.1 V7.9 M10.5 1.8 V7.9" stroke="#9d9d9d" stroke-width="1.45" stroke-linecap="round"/></svg>
<div class="b" style="left:737px;top:733px;width:18.5px;height:18.3px;border-color:#efefef;background:#fff;border-radius:2.5px"></div>
<svg style="left:740.5px;top:736.5px" width="12" height="12"><path d="M5.1 1.7 A4.9 4.9 0 1 0 10 6.6 H5.1 Z" fill="#999"/><path d="M6.3 0.5 A4.6 4.6 0 0 1 10.9 5.1 H6.3 Z" fill="#999"/></svg>
<div class="b" style="left:760px;top:733px;width:18.5px;height:18.3px;border-color:#efefef;background:#fff;border-radius:2.5px"></div>
<svg style="left:764px;top:737px" width="12" height="10"><path d="M1.6 5.9 V7.9 M4.6 3.1 V7.9 M7.6 5.1 V7.9 M10.5 1.8 V7.9" stroke="#9d9d9d" stroke-width="1.45" stroke-linecap="round"/></svg>
<div class="b" style="left:815px;top:733px;width:18.5px;height:18.3px;border-color:#efefef;background:#fff;border-radius:2.5px"></div>
<svg style="left:818.5px;top:736.5px" width="12" height="12"><path d="M5.1 1.7 A4.9 4.9 0 1 0 10 6.6 H5.1 Z" fill="#999"/><path d="M6.3 0.5 A4.6 4.6 0 0 1 10.9 5.1 H6.3 Z" fill="#999"/></svg>
<div class="b" style="left:838.3px;top:733px;width:18.5px;height:18.3px;border-color:#efefef;background:#fff;border-radius:2.5px"></div>
<svg style="left:842.3px;top:737px" width="12" height="10"><path d="M1.6 5.9 V7.9 M4.6 3.1 V7.9 M7.6 5.1 V7.9 M10.5 1.8 V7.9" stroke="#9d9d9d" stroke-width="1.45" stroke-linecap="round"/></svg>
<div class="b" style="left:898px;top:733px;width:18.5px;height:18.3px;border-color:#efefef;background:#fff;border-radius:2.5px"></div>
<svg style="left:901.5px;top:736.5px" width="12" height="12"><path d="M5.1 1.7 A4.9 4.9 0 1 0 10 6.6 H5.1 Z" fill="#999"/><path d="M6.3 0.5 A4.6 4.6 0 0 1 10.9 5.1 H6.3 Z" fill="#999"/></svg>
<div class="b" style="left:921.2px;top:733px;width:18.5px;height:18.3px;border-color:#efefef;background:#fff;border-radius:2.5px"></div>
<svg style="left:925.2px;top:737px" width="12" height="10"><path d="M1.6 5.9 V7.9 M4.6 3.1 V7.9 M7.6 5.1 V7.9 M10.5 1.8 V7.9" stroke="#9d9d9d" stroke-width="1.45" stroke-linecap="round"/></svg>
<div class="b" style="left:972.4px;top:733px;width:18.5px;height:18.3px;border-color:#efefef;background:#fff;border-radius:2.5px"></div>
<svg style="left:975.9px;top:736.5px" width="12" height="12"><path d="M5.1 1.7 A4.9 4.9 0 1 0 10 6.6 H5.1 Z" fill="#999"/><path d="M6.3 0.5 A4.6 4.6 0 0 1 10.9 5.1 H6.3 Z" fill="#999"/></svg>
<div class="b" style="left:995.3px;top:733px;width:18.5px;height:18.3px;border-color:#efefef;background:#fff;border-radius:2.5px"></div>
<svg style="left:999.3px;top:737px" width="12" height="10"><path d="M1.6 5.9 V7.9 M4.6 3.1 V7.9 M7.6 5.1 V7.9 M10.5 1.8 V7.9" stroke="#9d9d9d" stroke-width="1.45" stroke-linecap="round"/></svg>
<div class="t" style="left:455.43px;top:772.17px;font-size:10.2px;color:#222;font-weight:400;">50<span style="margin-left:1.7px"></span>353</div>
<div class="t" style="left:556.18px;top:772.17px;font-size:10.2px;color:#222;font-weight:400;">42<span style="margin-left:1.7px"></span>741</div>
<div class="t" style="left:656.18px;top:772.17px;font-size:10.2px;color:#222;font-weight:400;">75<span style="margin-left:1.7px"></span>438</div>
<div class="t" style="left:747.88px;top:772.17px;font-size:10.2px;color:#222;font-weight:400;">97,9<span style="margin-left:1.7px"></span>%</div>
<div class="t" style="left:826.88px;top:772.17px;font-size:10.2px;color:#222;font-weight:400;">47,2<span style="margin-left:1.7px"></span>%</div>
<div class="t" style="left:926.32px;top:772.17px;font-size:10.2px;color:#222;font-weight:400;">1,5</div>
<div class="t" style="left:994.51px;top:772.17px;font-size:10.2px;color:#222;font-weight:400;">1:11</div>
<div class="t" style="left:468.49px;top:805.87px;font-size:10.2px;color:#222;font-weight:400;">516</div>
<div class="t" style="left:569.24px;top:805.87px;font-size:10.2px;color:#222;font-weight:400;">497</div>
<div class="t" style="left:669.24px;top:805.87px;font-size:10.2px;color:#222;font-weight:400;">752</div>
<div class="t" style="left:747.88px;top:805.87px;font-size:10.2px;color:#222;font-weight:400;">86,1<span style="margin-left:1.7px"></span>%</div>
<div class="t" style="left:826.88px;top:805.87px;font-size:10.2px;color:#222;font-weight:400;">45,3<span style="margin-left:1.7px"></span>%</div>
<div class="t" style="left:920.65px;top:805.87px;font-size:10.2px;color:#222;font-weight:400;">1,46</div>
<div class="t" style="left:993.75px;top:805.87px;font-size:10.2px;color:#222;font-weight:400;">0:53</div>
<div style="position:absolute;left:420.5px;top:820.6px;width:65.00px;height:2.20px;background:#faeee2;border-radius:1px"></div>
<div style="position:absolute;left:420.5px;top:820.6px;width:37.75px;height:2.20px;background:#f1ca96;border-radius:1px"></div>
<div style="position:absolute;left:504.5px;top:820.6px;width:81.75px;height:2.20px;background:#faeee2;border-radius:1px"></div>
<div style="position:absolute;left:504.5px;top:820.6px;width:47.50px;height:2.20px;background:#f1ca96;border-radius:1px"></div>
<div style="position:absolute;left:605.5px;top:820.6px;width:80.75px;height:2.20px;background:#faeee2;border-radius:1px"></div>
<div style="position:absolute;left:605.5px;top:820.6px;width:47.00px;height:2.20px;background:#f1ca96;border-radius:1px"></div>
<div style="position:absolute;left:705.5px;top:820.6px;width:73.00px;height:2.20px;background:#faeee2;border-radius:1px"></div>
<div style="position:absolute;left:705.5px;top:820.6px;width:69.00px;height:2.20px;background:#f1ca96;border-radius:1px"></div>
<div style="position:absolute;left:798px;top:820.6px;width:59.50px;height:2.20px;background:#faeee2;border-radius:1px"></div>
<div style="position:absolute;left:798px;top:820.6px;width:51.50px;height:2.20px;background:#f1ca96;border-radius:1px"></div>
<div style="position:absolute;left:876.8px;top:820.6px;width:63.70px;height:2.20px;background:#faeee2;border-radius:1px"></div>
<div style="position:absolute;left:876.8px;top:820.6px;width:57.20px;height:2.20px;background:#f1ca96;border-radius:1px"></div>
<div style="position:absolute;left:959.4px;top:820.6px;width:54.20px;height:2.20px;background:#faeee2;border-radius:1px"></div>
<div style="position:absolute;left:959.4px;top:820.6px;width:25.60px;height:2.20px;background:#f1ca96;border-radius:1px"></div>
<div class="t" style="left:468.49px;top:838.27px;font-size:10.2px;color:#222;font-weight:400;">620</div>
<div class="t" style="left:569.24px;top:838.27px;font-size:10.2px;color:#222;font-weight:400;">595</div>
<div class="t" style="left:669.24px;top:838.27px;font-size:10.2px;color:#222;font-weight:400;">956</div>
<div class="t" style="left:747.88px;top:838.27px;font-size:10.2px;color:#222;font-weight:400;">86,6<span style="margin-left:1.7px"></span>%</div>
<div class="t" style="left:835.39px;top:838.27px;font-size:10.2px;color:#222;font-weight:400;">46<span style="margin-left:1.7px"></span>%</div>
<div class="t" style="left:920.65px;top:838.27px;font-size:10.2px;color:#222;font-weight:400;">1,54</div>
<div class="t" style="left:993.75px;top:838.27px;font-size:10.2px;color:#222;font-weight:400;">1:15</div>
<div style="position:absolute;left:420.5px;top:853.0px;width:65.00px;height:2.20px;background:#faeee2;border-radius:1px"></div>
<div style="position:absolute;left:420.5px;top:853.0px;width:45.75px;height:2.20px;background:#f1ca96;border-radius:1px"></div>
<div style="position:absolute;left:504.5px;top:853.0px;width:81.75px;height:2.20px;background:#faeee2;border-radius:1px"></div>
<div style="position:absolute;left:504.5px;top:853.0px;width:57.50px;height:2.20px;background:#f1ca96;border-radius:1px"></div>
<div style="position:absolute;left:605.5px;top:853.0px;width:80.75px;height:2.20px;background:#faeee2;border-radius:1px"></div>
<div style="position:absolute;left:605.5px;top:853.0px;width:60.00px;height:2.20px;background:#f1ca96;border-radius:1px"></div>
<div style="position:absolute;left:705.5px;top:853.0px;width:73.00px;height:2.20px;background:#faeee2;border-radius:1px"></div>
<div style="position:absolute;left:705.5px;top:853.0px;width:69.50px;height:2.20px;background:#f1ca96;border-radius:1px"></div>
<div style="position:absolute;left:798px;top:853.0px;width:59.50px;height:2.20px;background:#faeee2;border-radius:1px"></div>
<div style="position:absolute;left:798px;top:853.0px;width:52.30px;height:2.20px;background:#f1ca96;border-radius:1px"></div>
<div style="position:absolute;left:876.8px;top:853.0px;width:63.70px;height:2.20px;background:#faeee2;border-radius:1px"></div>
<div style="position:absolute;left:876.8px;top:853.0px;width:60.20px;height:2.20px;background:#f1ca96;border-radius:1px"></div>
<div style="position:absolute;left:959.4px;top:853.0px;width:54.20px;height:2.20px;background:#faeee2;border-radius:1px"></div>
<div style="position:absolute;left:959.4px;top:853.0px;width:35.90px;height:2.20px;background:#f1ca96;border-radius:1px"></div>
<div class="t" style="left:468.49px;top:870.67px;font-size:10.2px;color:#222;font-weight:400;">575</div>
<div class="t" style="left:569.24px;top:870.67px;font-size:10.2px;color:#222;font-weight:400;">547</div>
<div class="t" style="left:669.24px;top:870.67px;font-size:10.2px;color:#222;font-weight:400;">850</div>
<div class="t" style="left:747.88px;top:870.67px;font-size:10.2px;color:#222;font-weight:400;">86,3<span style="margin-left:1.7px"></span>%</div>
<div class="t" style="left:826.88px;top:870.67px;font-size:10.2px;color:#222;font-weight:400;">49,6<span style="margin-left:1.7px"></span>%</div>
<div class="t" style="left:920.65px;top:870.67px;font-size:10.2px;color:#222;font-weight:400;">1,48</div>
<div class="t" style="left:993.75px;top:870.67px;font-size:10.2px;color:#222;font-weight:400;">1:05</div>
</body></html>
